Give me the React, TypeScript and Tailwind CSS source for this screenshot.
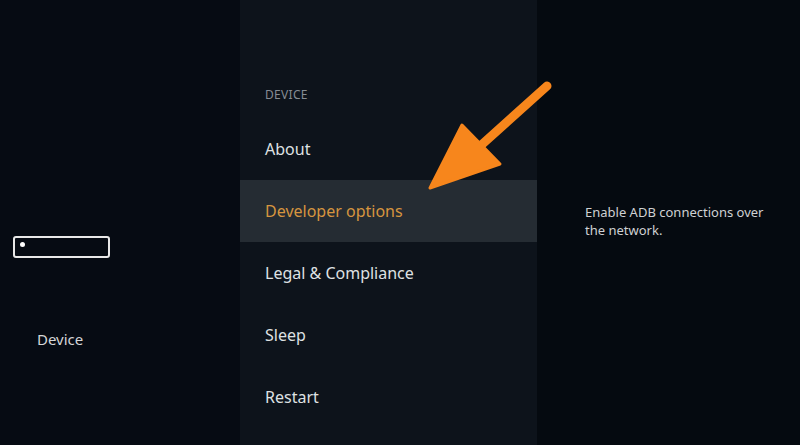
import React from "react";

export default function App() {
  const font = { fontFamily: '"Noto Sans", "Open Sans", sans-serif' };
  const rows = ["About", "Developer options", "Legal & Compliance", "Sleep", "Restart"];
  return (
    <div className="relative w-[800px] h-[445px] overflow-hidden flex bg-[#050a10]" style={font}>
      <div className="w-[240px] h-full bg-[#060b13] flex flex-col pt-[236px]">
        <div className="ml-[13px] w-[97px] h-[22px] border-2 border-[#e8e8e8] rounded-[3px] relative">
          <div className="absolute left-[5px] top-[4px] w-[5px] h-[5px] rounded-full bg-white" />
        </div>
        <div className="ml-[37px] mt-[70px] text-[15px] text-[#d4d6d8]">Device</div>
      </div>
      <div className="w-[297px] h-full bg-[#0d131b] flex flex-col">
        <div className="h-[118px] flex items-end pb-[14px] pl-[25px] text-[12px] text-[#868c94] tracking-wide">DEVICE</div>
        {rows.map((r, i) => (
          <div
            key={r}
            className={
              i === 1
                ? "h-[62px] flex items-center pl-[25px] text-[16px] bg-[#252c33] text-[#d6953f]"
                : "h-[62px] flex items-center pl-[25px] text-[16px] text-[#dfe1e3]"
            }
          >
            {r}
          </div>
        ))}
      </div>
      <div className="flex-1 h-full bg-[#050a10] pt-[203px] pl-[48px] pr-[20px] text-[13px] leading-[18px] text-[#cfd1d3]">
        Enable ADB connections over the network.
      </div>
      <svg className="absolute left-0 top-0" width="800" height="445" viewBox="0 0 800 445">
        <line x1="547" y1="86" x2="478" y2="148" stroke="#f7861c" strokeWidth="9" strokeLinecap="round" />
        <polygon points="462,125 500,164 430,188" fill="#f7861c" stroke="#f7861c" strokeWidth="3" strokeLinejoin="round" />
      </svg>
    </div>
  );
}
